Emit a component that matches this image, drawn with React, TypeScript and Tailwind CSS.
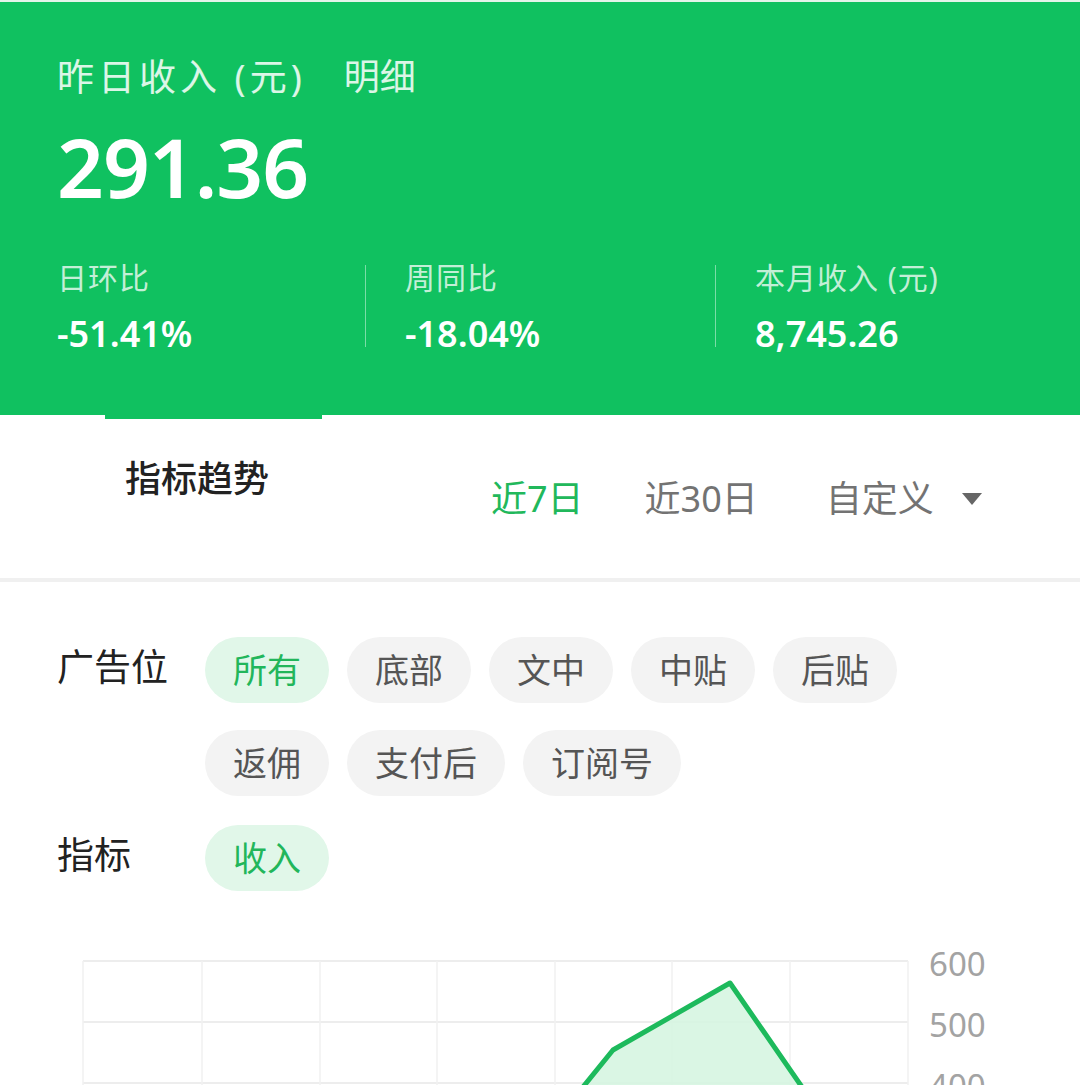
import React from "react";

const font = {
  fontFamily: '"Noto Sans", "Noto Sans CJK SC", sans-serif',
};

const stats = [
  { label: "日环比", value: "-51.41%" },
  { label: "周同比", value: "-18.04%" },
  { label: "本月收入 (元)", value: "8,745.26" },
];

const slotsRow1 = ["所有", "底部", "文中", "中贴", "后贴"];
const slotsRow2 = ["返佣", "支付后", "订阅号"];

function Chip({ text, active = false }: { text: string; active?: boolean }) {
  return (
    <div
      className={`flex h-[66px] items-center rounded-full px-[28px] text-[34px] ${
        active ? "bg-[#e1f7e9] text-[#22b65b]" : "bg-[#f3f3f3] text-[#555555]"
      }`}
    >
      {text}
    </div>
  );
}

function TrendChart() {
  const xs = [83, 202, 320, 437, 555, 672, 790, 908];
  const ys = [19, 80, 141];
  const line = "571,160 583,145 613,108 730,41 802,145 812,160";
  return (
    <svg width="1080" height="160" className="block">
      {ys.map((y) => (
        <line key={y} x1="83" x2="908" y1={y} y2={y} stroke="#ededed" strokeWidth="2" />
      ))}
      {xs.map((x) => (
        <line key={x} x1={x} x2={x} y1="19" y2="160" stroke="#f1f1f1" strokeWidth="1.5" />
      ))}
      <polygon points={`${line} 812,170 571,170`} fill="#d3f4df" fillOpacity="0.85" />
      <polyline
        points={line}
        fill="none"
        stroke="#1dba5c"
        strokeWidth="5"
        strokeLinejoin="round"
      />
      {["600", "500", "400"].map((t, i) => (
        <text
          key={t}
          x="929"
          y={34 + i * 61}
          fontSize="33"
          fill="#a3a3a3"
          fontFamily='"Noto Sans", sans-serif'
        >
          {t}
        </text>
      ))}
    </svg>
  );
}

export default function App() {
  return (
    <div className="relative h-[1085px] w-[1080px] overflow-hidden bg-white" style={font}>
      {/* 顶部收入卡片 */}
      <div className="h-[415px] border-t-2 border-[#e4f4ea] bg-[#10c160] pl-[57px] text-white">
        <div className="flex items-center pt-[51px] leading-[48px] text-white/85">
          <span className="text-[37px] tracking-[4px]">昨日收入 (元)</span>
          <span className="ml-[38px] text-[36px]">明细</span>
        </div>
        <div className="mt-[23px] text-[82px] font-semibold leading-[84px] tracking-[-1px]">291.36</div>
        <div className="mt-[50px] flex">
          {stats.map((s, i) => (
            <div key={s.label} className="flex">
              {i > 0 ? <div className="mt-[7px] h-[82px] w-px bg-white/45" /> : null}
              <div className={i === 0 ? "w-[308px]" : i === 1 ? "w-[349px] pl-[39px]" : "pl-[39px]"}>
                <div className="text-[30px] leading-[40px] tracking-[1px] text-white/75">{s.label}</div>
                <div className="mt-[14px] text-[36px] font-semibold leading-[44px]">{s.value}</div>
              </div>
            </div>
          ))}
        </div>
      </div>
      <div className="ml-[105px] h-[4px] w-[217px] bg-[#10c160]" />

      {/* 指标趋势 */}
      <div className="flex h-[159px] pl-[125px]">
        <div className="w-[366px] pt-[36px] text-[36px] font-medium leading-[48px] text-[#222222]">
          指标趋势
        </div>
        <div className="flex items-center self-start pt-[56px] text-[36px] leading-[48px]">
          <span className="text-[#21b85b]">近7日</span>
          <span className="ml-[61px] text-[#737373]">近30日</span>
          <span className="ml-[68px] text-[#737373]">自定义</span>
          <svg width="20" height="13" viewBox="0 0 20 13" className="ml-[28px]">
            <path d="M0 0 L20 0 L10 12 Z" fill="#666666" />
          </svg>
        </div>
      </div>
      <div className="h-[4px] bg-[#f0f0f0]" />

      {/* 筛选 */}
      <div className="pl-[57px] pt-[55px]">
        <div className="flex">
          <div className="w-[148px] text-[37px] leading-[60px] text-[#222222]">广告位</div>
          <div className="flex flex-col gap-y-[27px]">
            <div className="flex gap-x-[18px]">
              {slotsRow1.map((t, i) => (
                <Chip key={t} text={t} active={i === 0} />
              ))}
            </div>
            <div className="flex gap-x-[18px]">
              {slotsRow2.map((t) => (
                <Chip key={t} text={t} />
              ))}
            </div>
          </div>
        </div>
        <div className="mt-[29px] flex">
          <div className="w-[148px] text-[37px] leading-[60px] text-[#222222]">指标</div>
          <Chip text="收入" active />
        </div>
      </div>

      <div className="mt-[51px]">
        <TrendChart />
      </div>
    </div>
  );
}
